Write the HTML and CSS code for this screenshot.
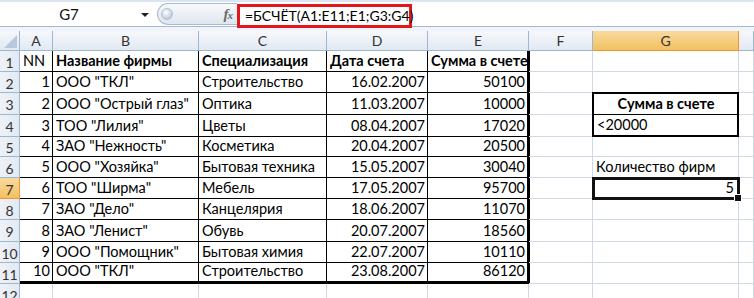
FILE: index.html
```html
<!DOCTYPE html>
<html lang="ru">
<head>
    <meta charset="UTF-8">
    <meta name="viewport" content="width=device-width, initial-scale=1.0">
    <title>БСЧЁТ - пример</title>
    <link rel="stylesheet" href="styles.css">
</head>
<body>
    <div class="formula-bar">
        <div class="name-box">
            <span class="name">G7</span>
            <span class="arrow"></span>
        </div>
        <div class="pill">
            <span class="knob"></span>
            <span class="fx">f<span class="fx-x">x</span></span>
        </div>
        <div class="formula">
            <span class="formula-text">=БСЧЁТ(A1:E11;E1;G3:G4)</span>
        </div>
    </div>
    <div class="bar-gap"></div>

    <div class="sheet" id="sheet"></div>

    <script>
        // column H is only a sliver at the right edge, its letter is off screen
        const columns = ['A', 'B', 'C', 'D', 'E', 'F', 'G', ''];
        const rows = [
            ['NN', 'Название фирмы', 'Специализация', 'Дата счета', 'Сумма в счете', '', ''],
            [1, 'ООО "ТКЛ"', 'Строительство', '16.02.2007', 50100, '', ''],
            [2, 'ООО "Острый глаз"', 'Оптика', '11.03.2007', 10000, '', 'Сумма в счете'],
            [3, 'ТОО "Лилия"', 'Цветы', '08.04.2007', 17020, '', '<20000'],
            [4, 'ЗАО "Нежность"', 'Косметика', '20.04.2007', 20500, '', ''],
            [5, 'ООО "Хозяйка"', 'Бытовая техника', '15.05.2007', 30040, '', 'Количество фирм'],
            [6, 'ТОО "Ширма"', 'Мебель', '17.05.2007', 95700, '', 5],
            [7, 'ЗАО "Дело"', 'Канцелярия', '18.06.2007', 11070, '', ''],
            [8, 'ЗАО "Ленист"', 'Обувь', '20.07.2007', 18560, '', ''],
            [9, 'ООО "Помощник"', 'Бытовая химия', '22.07.2007', 10110, '', ''],
            [10, 'ООО "ТКЛ"', 'Строительство', '23.08.2007', 86120, '', ''],
            ['', '', '', '', '', '', '']
        ];

        const sheet = document.getElementById('sheet');

        function addCell(className, text) {
            const cell = document.createElement('div');
            cell.className = className;
            if (text !== '' && text !== undefined) {
                const span = document.createElement('span');
                span.textContent = text;
                cell.appendChild(span);
            }
            sheet.appendChild(cell);
            return cell;
        }

        addCell('corner');
        columns.forEach(col => {
            addCell('col-head' + (col === 'G' ? ' selected' : ''), col);
        });

        rows.forEach((row, i) => {
            const r = i + 1;
            addCell('row-head' + (r === 7 ? ' selected' : ''), r);
            for (let c = 0; c < 8; c++) {
                const value = c < row.length ? row[c] : '';
                let cls = 'cell';
                if (r <= 11 && c <= 4) cls += ' table';
                if (r <= 11 && c === 4) cls += ' edge-right';
                if (r === 11 && c <= 4) cls += ' edge-bottom';
                if (r === 1 && c >= 1 && c <= 4) cls += ' bold';
                if (r > 1 && r <= 11 && (c === 0 || c === 3 || c === 4)) cls += ' num';
                if (c === 6 && r === 3) cls += ' crit crit-top bold center';
                if (c === 6 && r === 4) cls += ' crit crit-bottom';
                if (c === 6 && r === 7) cls += ' active num';
                addCell(cls, value);
            }
        });
    </script>
</body>
</html>
```

FILE: styles.css
```css
:root {
    --grid-color: #d0d7e5;
    --head-border: #9eb6ce;
    --sel-border: #f29436;
    --text-color: #000;
}

* {
    box-sizing: border-box;
    margin: 0;
    padding: 0;
}

body {
    font-family: 'Lato', 'Liberation Sans', sans-serif;
    font-size: 14.5px;
    color: var(--text-color);
    background-color: #fff;
    width: 754px;
    height: 298px;
    overflow: hidden;
}

/* formula bar */

.formula-bar {
    display: flex;
    height: 27px;
    border-top: 2px solid #dbe5f1;
    border-bottom: 1px solid #a5b8d1;
    background-color: #fff;
}

.name-box {
    width: 157px;
    display: flex;
    align-items: center;
    position: relative;
}

.name {
    width: 138px;
    text-align: center;
    font-size: 15px;
    color: #111;
}

.arrow {
    width: 0;
    height: 0;
    border-left: 4px solid transparent;
    border-right: 4px solid transparent;
    border-top: 4px solid #222;
    margin-left: 3px;
    margin-top: 2px;
}

.pill {
    width: 80px;
    height: 22px;
    margin-top: 1px;
    border: 1px solid #a9bbd3;
    border-right: none;
    border-radius: 11px 0 0 11px;
    background: linear-gradient(#f7f9fc, #dfe6ef);
    display: flex;
    align-items: center;
    justify-content: space-between;
    padding: 0 5px 0 3px;
}

.knob {
    width: 12px;
    height: 12px;
    border-radius: 50%;
    background: radial-gradient(circle at 40% 35%, #ffffff, #c3ccd8 70%);
    border: 1px solid #b5c2d3;
}

.fx {
    font-family: 'Liberation Serif', serif;
    font-style: italic;
    font-weight: bold;
    font-size: 15px;
    color: #6b6b6b;
    letter-spacing: -1px;
}

.fx-x {
    font-size: 11px;
}

.formula {
    flex: 1;
    position: relative;
    z-index: 2;
}

.formula-text {
    display: inline-block;
    margin-top: 2px;
    height: 24px;
    width: 175px;
    border: 3px solid #e3161c;
    padding-left: 5px;
    font-size: 14px;
    line-height: 18px;
    color: #000;
    white-space: nowrap;
}

.bar-gap {
    height: 4px;
    background-color: #f1f5fa;
}

/* sheet */

.sheet {
    display: grid;
    width: 754px;
    grid-template-columns: 20px 33px 146px 128px 101px 101px 64px 146px 1fr;
    grid-template-rows: 20px 21px 21px 22px 22px 20px 21px 21px 21px 22px 21px 21px 21px;
}

.corner,
.col-head,
.row-head {
    background: linear-gradient(#f6f8fb, #e2e9f3);
    border-right: 1px solid var(--head-border);
    border-bottom: 1px solid var(--head-border);
    color: #333;
    font-size: 14px;
    display: flex;
    align-items: center;
    justify-content: center;
}

.corner {
    position: relative;
}

.corner::after {
    content: '';
    position: absolute;
    right: 2px;
    bottom: 2px;
    border-left: 13px solid transparent;
    border-bottom: 13px solid #b9c9dd;
}

.row-head {
    background: linear-gradient(90deg, #eef2f8, #e3e9f2);
    padding-top: 2px;
}

.col-head.selected,
.row-head.selected {
    background: linear-gradient(#f9da9f, #f1c15f);
    border-color: var(--sel-border);
    color: #333;
}

.cell {
    border-right: 1px solid var(--grid-color);
    border-bottom: 1px solid var(--grid-color);
    display: flex;
    align-items: flex-end;
    padding: 0 2px 1px 3px;
    line-height: 18px;
    white-space: nowrap;
}

.cell.table {
    border-right-color: #000;
    border-bottom-color: #000;
}

.cell.edge-right {
    border-right-width: 3px;
    margin-right: -1px;
}

.cell.edge-bottom {
    border-bottom-width: 3px;
}

.bold {
    font-weight: bold;
}

.num {
    justify-content: flex-end;
}

.center {
    justify-content: center;
}

.crit {
    border-left: 2px solid #000;
    border-right: 2px solid #000;
    margin-left: -1px;
}

.crit-top {
    border-top: 2px solid #000;
    margin-top: -1px;
    border-bottom-color: #000;
}

.crit-bottom {
    border-bottom: 2px solid #000;
}

.active {
    position: relative;
    padding-right: 4px;
}

.active::before {
    content: '';
    position: absolute;
    top: -1px;
    left: -1px;
    right: -2px;
    bottom: -2px;
    border: 3px solid #111;
}

.active::after {
    content: '';
    position: absolute;
    right: -4px;
    bottom: -4px;
    width: 6px;
    height: 6px;
    background-color: #111;
    border: 1px solid #fff;
}
```
